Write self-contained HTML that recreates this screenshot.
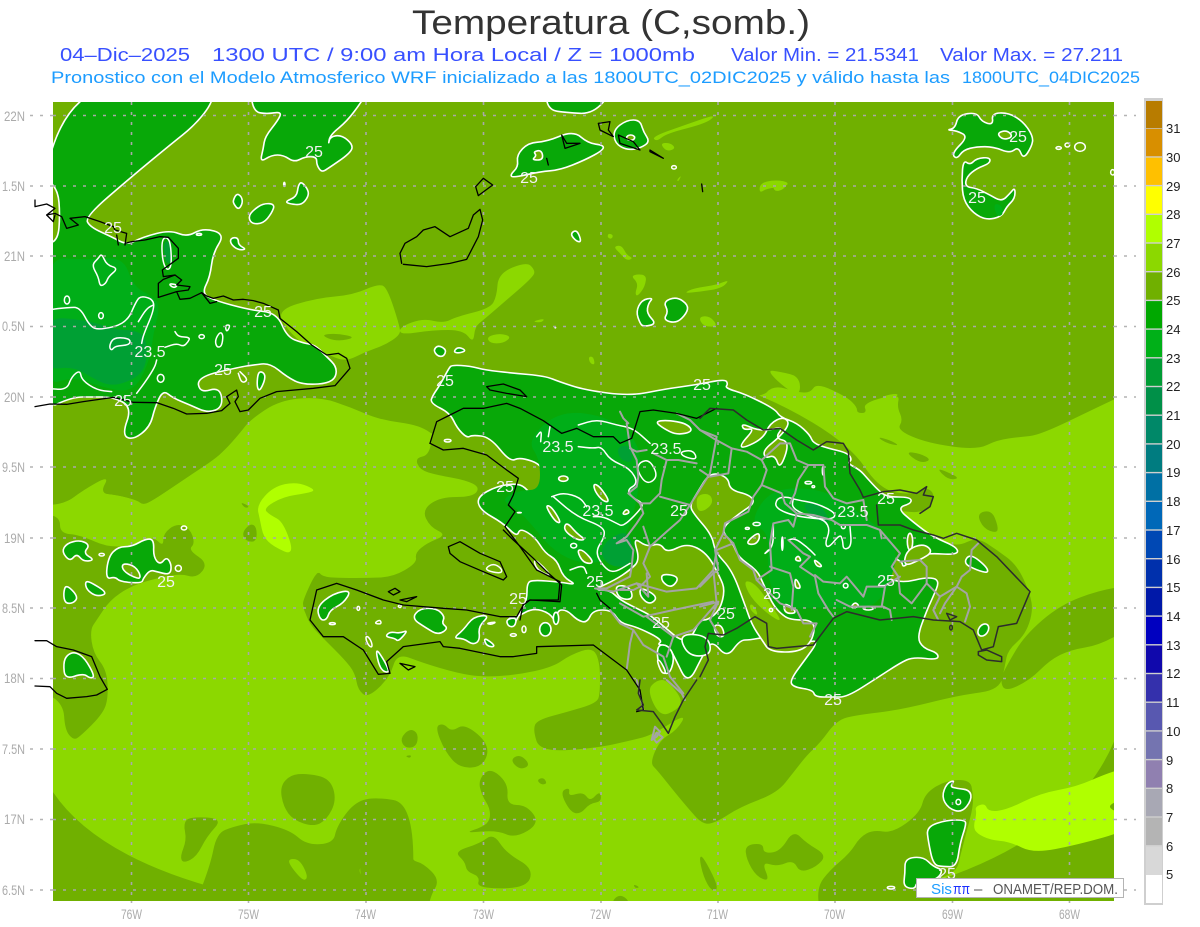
<!DOCTYPE html>
<html><head><meta charset="utf-8"><title>Temperatura</title>
<style>
html,body{margin:0;padding:0;background:#fff}
svg{display:block}
polygon,polyline,path,ellipse{vector-effect:non-scaling-stroke;stroke-linejoin:round;stroke-linecap:round}
.m{fill:#8cd800;stroke:none}
.d{fill:#70b000;stroke:none}
.y{fill:#b0ff00;stroke:none}
.e{fill:#00ae18;stroke:none}
.f{fill:#00a034;stroke:none}
.g{fill:#08a808;stroke:#fff;stroke-width:1.6}
.h{fill:#70b000;stroke:#fff;stroke-width:1.6}
.l{fill:none;stroke:#fff;stroke-width:1.5}
.c{fill:none;stroke:#000;stroke-width:1.3}
.k{fill:none;stroke:#2c2c2c;stroke-width:1.5}
.b{fill:none;stroke:#a4a4a4;stroke-width:2}
.gr path{stroke-linecap:butt}
.t text{font-family:"Liberation Sans",sans-serif}
.lab text{font-family:"Liberation Sans",sans-serif;font-size:16px;fill:#f2f2f2;text-anchor:middle}
.ax text{font-family:"Liberation Sans",sans-serif;font-size:14px;fill:#ababab}
.cb text{font-family:"Liberation Sans",sans-serif;font-size:13px;fill:#222}
</style></head><body>
<svg xmlns="http://www.w3.org/2000/svg" width="1200" height="927" viewBox="0 0 1200 927">
<defs><clipPath id="mp"><rect x="53" y="102" width="1061" height="799"/></clipPath></defs>

<!-- titles -->
<g class="t">
<text x="412" y="34" font-size="34" fill="#333" textLength="398" lengthAdjust="spacingAndGlyphs">Temperatura (C,somb.)</text>
<g font-size="18" fill="#3850ff">
<text x="60" y="61" textLength="130" lengthAdjust="spacingAndGlyphs">04–Dic–2025</text>
<text x="212" y="61" textLength="483" lengthAdjust="spacingAndGlyphs">1300 UTC / 9:00 am Hora Local / Z = 1000mb</text>
<text x="731" y="61" textLength="188" lengthAdjust="spacingAndGlyphs">Valor Min. = 21.5341</text>
<text x="940" y="61" textLength="183" lengthAdjust="spacingAndGlyphs">Valor Max. = 27.211</text>
</g>
<g font-size="17" fill="#1c9cff">
<text x="51" y="83" textLength="899" lengthAdjust="spacingAndGlyphs">Pronostico con el Modelo Atmosferico WRF inicializado a las 1800UTC_02DIC2025 y válido hasta las</text>
<text x="962" y="83" textLength="178" lengthAdjust="spacingAndGlyphs">1800UTC_04DIC2025</text>
</g>
</g>

<g clip-path="url(#mp)">
<rect x="53" y="102" width="1061" height="799" fill="#70b000"/>

<!-- main 27 region -->
<polygon class="m" points="30,505 63,505 83,490 110,475 100,493 117,495 137,500 143,505 153,500 173,487 193,473 213,460 225,450 240,433 250,420 280,400 320,397 350,407 380,420 420,425 440,440 760,400 773,385 797,392 810,393 817,383 847,397 857,407 857,413 867,413 863,403 900,393 897,407 903,420 897,430 927,443 977,450 997,440 1020,437 1040,435 1100,406 1130,392 1130,925 30,925"/>
<polygon class="m" points="277,310 317,298 353,295 380,283 388,290 400,327 400,335 385,345 365,352 345,362 325,353 307,347 287,330"/>
<g transform="translate(0,220) scale(.33333)">
<polygon class="d" points="960,345 1010,340 1070,352 1010,365"/>
</g>
<g transform="translate(400,100) scale(.33333)">
<polygon class="m" points="0,680 70,655 130,670 170,650 270,625 290,590 295,520 380,485 405,510 400,530 320,600 250,660 225,680 220,730 190,690 100,690 0,705"/>
<polygon class="m" points="755,110 870,70 950,42 920,70 800,100 770,125"/>
<polygon class="m" points="780,130 810,128 828,145 800,155"/>
<polygon class="m" points="640,440 665,435 680,465 700,475 680,482 660,460"/>
<polygon class="m" points="625,400 640,405 635,418 622,412"/>
<polygon class="m" points="690,525 740,522 735,560 712,590 705,580 715,550"/>
<polygon class="m" points="850,580 880,565 950,555 990,538 965,565 900,575"/>
<polygon class="m" points="895,650 930,648 955,680 910,680"/>
<polygon class="m" points="1080,250 1120,240 1165,245 1160,260 1100,265 1078,280"/>
<polygon class="m" points="1100,810 1140,815 1200,830 1200,890 1150,860"/>
<polygon class="m" points="260,710 300,700 335,710 310,730 270,730"/>
<polygon class="m" points="395,665 435,655 425,668"/>
<polygon class="m" points="565,770 580,770 585,795 570,790"/>
<polygon class="m" points="830,240 845,225 835,245"/>
</g>
<g transform="translate(780,100) scale(.33333)">
<polygon class="m" points="-20,240 25,245 10,270 -20,275"/>
<polygon class="m" points="300,890 360,878 340,900"/>
</g>

<!-- 26 over 27: Hispaniola envelope -->
<polygon class="d" points="303,600 317,570 323,577 343,578 367,578 393,577 417,563 415,553 427,543 447,535 430,527 422,510 440,497 473,497 480,487 465,480 437,475 420,470 415,458 430,455 433,425 433,380 700,375 775,400 850,445 880,490 913,495 927,487 935,495 930,508 917,513 895,510 933,537 957,547 977,537 997,550 1017,565 1030,593 1033,612 1025,635 1008,650 1005,665 1000,690 960,695 900,710 857,715 837,720 820,743 807,755 793,773 777,793 740,807 717,822 703,825 687,807 673,790 657,770 650,763 660,740 677,730 687,713 652,735 633,740 597,748 540,752 533,730 537,720 567,712 597,703 600,693 600,663 593,647 570,655 553,667 517,675 482,677 457,673 423,663 397,653 390,677 368,698 358,690 355,673 345,660 325,640 310,625 303,607"/>
<polygon class="m" points="647,690 657,680 667,680 683,700 677,710 660,717"/>
<polygon class="d" points="1000,680 1007,665 1025,635 1060,605 1100,590 1135,585 1135,625 1100,645 1070,650 1050,660 1030,680 1005,692"/>
<!-- Mona / SE 26 -->
<polygon class="d" points="817,887 830,870 850,853 860,837 873,830 893,833 920,813 925,793 947,780 970,780 973,793 973,807 967,830 960,857 957,870 943,877 915,893 915,915 820,915"/>
<g transform="translate(40,450) scale(.33333)">
<polygon class="d" points="0,190 60,200 60,250 120,255 210,295 300,280 340,260 370,290 370,250 410,220 450,235 465,280 445,300 505,340 470,385 420,370 330,390 270,410 210,450 170,510 150,540 160,610 200,660 205,740 190,790 120,860 100,870 75,840 70,760 0,720"/>
<polygon class="d" points="-60,-60 555,-60 555,0 520,30 460,70 400,110 340,150 310,165 290,150 230,135 180,130 210,75 130,120 70,165 -60,165"/>
<polygon class="d" points="720,1010 750,975 800,970 870,985 890,1050 860,1110 820,1130 760,1110 730,1070"/>
<polygon class="d" points="450,1400 510,1250 530,1150 580,1130 650,1115 750,1140 800,1185 880,1180 890,1130 940,1060 1000,1040 1120,1060 1120,1400"/>
<polygon class="m" points="750,1225 780,1230 805,1280 790,1295 745,1240"/>
<polygon class="m" points="950,1250 1010,1235 975,1280 975,1300"/>
<polygon class="d" points="430,1240 420,1220 440,1170 430,1120 450,1100 550,1105 500,1160 470,1220"/>
<polygon class="d" points="130,1250 240,1210 275,1260 200,1290 150,1280"/>
<polygon class="d" points="50,1400 110,1305 170,1310 130,1400"/>
<polygon class="d" points="310,1265 350,1260 345,1290 390,1400 300,1400 330,1310"/>
<polygon class="d" points="130,1190 155,1185 150,1200 135,1200"/>
<polygon class="d" points="605,250 630,220 650,230 650,275 620,275"/>
<polygon class="d" points="600,155 630,170 615,175"/>
<polygon class="d" points="790,470 815,445 815,495 795,490"/>
<polygon class="d" points="830,360 845,390 850,405 825,410"/>
<polygon class="y" points="650,165 700,110 770,95 830,120 800,130 730,140 670,175 690,195 730,215 765,318 700,290 670,260 660,210"/>
</g>
<g transform="translate(380,680) scale(.33333)">
<polygon class="d" points="-60,360 70,400 100,460 90,540 130,550 180,600 150,650 140,720 -60,720"/>
<polygon class="d" points="60,175 90,145 115,160 110,200 75,205"/>
<polygon class="d" points="75,228 95,225 90,235"/>
<polygon class="d" points="165,140 190,130 215,155 255,130 330,195 310,260 240,265 195,215"/>
<polygon class="d" points="390,240 420,222 452,255 420,270"/>
<polygon class="d" points="295,300 330,262 385,310 380,375 440,375 480,430 405,475 350,450 250,460 310,440 330,420 330,385 305,345"/>
<polygon class="d" points="222,515 300,490 340,460 380,520 460,565 440,625 290,625 300,590 260,575 255,545"/>
<polygon class="d" points="470,300 490,292 502,310 485,315"/>
<polygon class="d" points="540,335 570,322 565,350 610,335 630,365 660,332 665,365 630,370 600,403 570,395"/>
<polygon class="d" points="690,670 720,640 755,670"/>
<polygon class="d" points="1095,495 1150,490 1150,520 1200,515 1240,450 1280,490 1340,525 1310,560 1260,578 1240,540 1190,560 1145,545 1170,605 1130,590 1100,540"/>
<polygon class="d" points="957,530 970,530 1018,625 995,635 970,590"/>
<polygon class="d" points="760,612 780,622 765,625"/>
<polygon class="d" points="1360,520 1370,510 1370,522"/>
</g>
<g transform="translate(700,380) scale(.33333)">
<polygon class="d" points="530,170 570,180 600,198 560,190"/>
<polygon class="d" points="615,215 660,220 695,240 660,250"/>
<polygon class="d" points="710,265 740,275 780,295 745,300"/>
<polygon class="d" points="830,400 875,390 895,440 890,460 850,445"/>
</g>
<!-- 28 -->
<g transform="translate(860,770) scale(.33333)">
<polygon class="y" points="345,110 375,100 385,125 440,120 540,70 650,50 740,10 810,-10 810,80 730,110 810,140 810,180 650,225 520,250 450,215 390,210 350,190 340,170 350,130"/>
</g>

<!-- 25 fills: Cuba -->
<polygon class="g" points="40,85 213,85 213,102 195,125 170,145 130,178 85,217 90,227 112,237 127,245 143,237 170,230 187,237 203,228 225,234 213,253 210,277 202,293 213,300 250,310 277,313 287,337 303,343 315,345 325,355 338,368 333,383 303,385 287,377 270,363 253,365 240,367 197,377 200,393 220,387 223,407 208,413 190,405 173,398 163,390 155,407 150,427 133,440 122,435 132,407 113,397 93,397 72,397 40,412"/>
<polygon class="h" points="45,177 58,190 60,215 58,240 45,245"/>
<g transform="translate(0,220) scale(.33333)">
<polygon class="e" points="130,110 260,120 370,110 400,200 460,230 480,260 460,340 450,420 400,520 300,500 220,470 130,500"/>
<polygon class="f" points="130,290 260,300 350,330 400,330 440,350 440,440 400,480 330,500 270,470 220,440 130,450"/>
<polygon class="f" points="490,60 515,70 515,130 495,130"/>
<polygon class="l" points="305,100 320,135 355,145 325,170 318,190 300,200 295,170 275,135 295,115"/>
<polygon class="l" points="500,50 512,70 515,140 500,152 487,120 485,60"/>
<polyline class="l" points="140,270 205,262 240,262 270,320 300,330 380,310 410,240 425,228 460,238 462,270 430,345 425,370"/>
<polyline class="l" points="415,305 440,265 460,255"/>
<polyline class="l" points="470,420 465,440 440,480 410,520"/>
<polyline class="l" points="140,505 200,510 215,470 240,450 245,480 290,510 335,515"/>
<polygon class="l" points="340,352 390,355 390,375 345,378 335,392 327,380"/>
<polyline class="l" points="495,382 530,370 550,380 565,365 570,352 535,350 525,335"/>
<polygon class="l" points="660,335 670,345 665,380 650,382 645,360"/>
<polygon class="l" points="675,315 692,315 680,338"/>
<ellipse class="l" cx="201" cy="240" rx="8" ry="12"/>
<ellipse class="l" cx="482" cy="475" rx="10" ry="12"/>
<ellipse class="l" cx="605" cy="350" rx="8" ry="6"/>
<ellipse class="l" cx="303" cy="287" rx="7" ry="9"/>
<polygon class="g" points="775,450 800,465 780,515 770,500"/>
<polyline class="l" points="720,455 745,480 725,490 715,460"/>
<polygon class="g" points="505,190 535,195 520,205"/>
<polygon class="d" points="480,590 500,550 520,560 485,615"/>
</g>
<g transform="translate(0,0) scale(.33333)">
<polygon class="g" points="750,260 760,335 800,342 845,335 835,360 795,410 790,445 780,487 815,465 850,465 883,487 915,470 950,470 950,495 965,517 985,505 1050,460 1060,435 1025,405 990,410 985,435 990,405 1040,365 1085,305 1110,260"/>
<polygon class="g" points="700,600 710,580 725,590 728,610 715,630 700,610"/>
<polygon class="g" points="745,650 760,630 790,610 825,612 815,640 790,670 755,672"/>
<polygon class="g" points="855,605 890,590 895,555 905,545 925,570 925,590 905,615 870,612"/>
<polygon class="g" points="690,720 700,712 715,715 715,735 740,748 715,750 695,735"/>
<ellipse class="l" cx="853" cy="553" rx="2" ry="6"/>
<ellipse class="l" cx="597" cy="703" rx="8" ry="3"/>
</g>

<!-- SW Cuba patches -->
<g transform="translate(40,450) scale(.33333)">
<polygon class="g" points="65,305 80,280 120,270 150,285 130,310 165,330 130,335 110,310 90,335"/>
<polygon class="g" points="205,320 235,290 275,290 320,265 342,270 340,320 360,345 380,320 395,345 390,375 350,365 330,360 310,385 305,400 240,395 225,380 197,388"/>
<polygon class="h" points="245,340 280,345 300,370 300,390 250,365"/>
<polygon class="g" points="135,395 150,395 205,430 170,440 140,420"/>
<polygon class="g" points="78,402 115,440 100,460 75,460 70,430"/>
<polygon class="g" points="70,640 80,615 105,605 135,625 165,680 150,685 130,670 75,688"/>
<ellipse class="l" cx="185" cy="314" rx="8" ry="4"/>
<ellipse class="l" cx="415" cy="355" rx="9" ry="9"/>
<ellipse class="l" cx="432" cy="234" rx="8" ry="6"/>
</g>

<!-- top middle -->
<g transform="translate(400,100) scale(.33333)">
<polygon class="g" points="435,-30 445,30 500,38 580,42 640,-30"/>
<polygon class="g" points="350,165 385,128 440,125 520,92 565,130 610,135 610,150 555,180 480,210 420,215 340,233 330,225 355,200"/>
<polygon class="h" points="400,155 425,150 430,180 395,180 410,167"/>
<polygon class="g" points="640,90 680,60 720,60 730,95 750,125 720,145 680,150 645,130"/>
<ellipse class="h" cx="692" cy="113" rx="12" ry="8"/>
<polygon class="g" points="510,402 530,388 545,425 530,425"/>
<ellipse class="l" cx="822" cy="202" rx="7" ry="5"/>
<polygon class="g" points="708,635 725,600 760,593 745,610 740,640 770,672 730,680 720,670"/>
<polygon class="g" points="790,605 830,590 865,615 860,640 830,670 790,660 805,635"/>
<polygon class="g" points="100,750 115,735 140,750 130,770 112,768"/>
<polygon class="g" points="160,755 175,740 200,752 175,760"/>
<ellipse cx="466" cy="683" rx="3" ry="3" fill="#fff"/>
</g>

<!-- NE patches -->
<g transform="translate(780,100) scale(.33333)">
<polygon class="g" points="500,90 525,85 535,45 590,37 605,65 640,75 635,40 685,38 730,65 760,110 755,140 730,178 715,140 690,160 640,140 590,140 550,150 530,178 515,160 565,110 530,92"/>
<polygon class="h" points="650,100 680,90 700,110 670,120"/>
<polygon class="g" points="550,180 570,195 590,175 630,172 630,190 590,205 560,230 555,260 590,265 630,285 665,305 690,280 705,262 705,295 680,320 665,350 620,360 580,340 550,300 545,240"/>
<polygon class="e" points="640,310 665,315 670,345 650,350"/>
<ellipse class="l" cx="900" cy="141" rx="16" ry="13"/>
<ellipse class="l" cx="862" cy="135" rx="7" ry="6"/>
<ellipse class="l" cx="836" cy="144" rx="8" ry="4"/>
<ellipse class="l" cx="998" cy="217" rx="6" ry="8"/>
</g>

<!-- Mona / PR patches -->
<g transform="translate(860,770) scale(.33333)">
<polygon class="g" points="285,30 270,50 290,55 330,60 335,90 305,128 265,115 245,80 260,40"/>
<ellipse class="l" cx="295" cy="96" rx="7" ry="8"/>
<polygon class="g" points="200,170 260,150 315,150 318,165 300,220 290,290 250,290 220,285 205,215"/>
<polygon class="g" points="135,265 190,260 220,290 250,300 230,330 170,335 165,358 130,350 135,310"/>
<ellipse class="l" cx="93" cy="353" rx="11" ry="4"/>
</g>

<!-- Hispaniola 25 -->
<polygon class="g" points="430,403 433,395 440,385 449,368 452,365 470,366 485,370 512,373 545,376 560,382 585,390 630,396 665,389 695,385 725,379 728,384 725,388 745,394 775,409 780,417 797,423 810,435 813,443 827,448 848,453 852,460 847,463 860,470 867,478 878,490 887,497 910,497 912,503 897,508 913,522 933,537 957,547 958,555 927,553 913,558 903,568 902,561 880,552 863,552 877,568 883,577 903,583 927,577 940,580 933,597 927,610 917,637 923,648 938,653 938,660 913,657 900,663 877,678 847,697 833,697 815,697 813,690 793,687 790,680 807,657 817,643 813,640 790,650 770,650 765,637 750,640 740,640 727,658 712,640 703,655 688,685 675,658 668,645 657,645 663,640 637,627 620,623 612,610 593,610 587,623 577,620 567,610 557,610 557,625 550,613 533,608 517,617 507,618 513,627 520,613 527,600 527,583 533,580 560,582 577,585 563,577 557,560 545,553 535,537 520,528 517,537 503,523 480,510 477,497 497,486 520,483 530,493 538,500 547,487 543,465 520,457 510,462 490,437 472,435 467,438 457,428 450,413"/>
<!-- colour patches -->
<polygon class="e" points="527,440 560,410 610,417 640,443 640,480 633,520 610,565 560,560 520,510 500,500 520,490 540,490 540,460"/>
<g transform="translate(420,380) scale(.33333)">
<polygon class="f" points="560,480 620,450 640,500 630,560 570,560 540,520"/>
<polygon class="f" points="590,200 630,195 640,250 600,240"/>
</g>
<g transform="translate(700,380) scale(.33333)">
<polygon class="e" points="200,340 290,320 400,340 520,430 600,500 560,640 500,690 380,680 250,690 200,600 210,460 150,430"/>
<polygon class="f" points="300,370 360,370 395,430 350,425"/>
</g>
<!-- holes -->
<polygon class="h" points="710,472 728,477 730,490 750,495 755,503 740,513 725,525 723,533 733,543 738,557 757,570 763,583 772,603 780,613 790,620 815,620 813,640 800,652 770,652 762,640 752,625 745,605 732,570 715,552 712,535 693,513 690,505 697,493"/>
<g transform="translate(700,380) scale(.33333)">
<polygon class="m" points="-10,345 30,340 40,370 10,395 -10,390"/>
<polygon class="m" points="150,670 165,680 175,710 150,690"/>
<polygon class="m" points="130,600 165,610 210,670 250,730 200,700 150,650"/>
</g>
<polygon class="h" points="633,537 647,547 660,543 667,553 687,543 707,553 720,577 725,590 720,610 708,620 700,620 690,640 680,640 668,630 650,615 640,610 620,600 610,590 593,590 615,580 630,570 640,560"/>
<g transform="translate(300,530) scale(.33333)">
<polygon class="g" points="1085,130 1140,140 1115,175 1085,155"/>
<polygon class="g" points="1020,170 1075,200 1050,225 1020,200"/>
<polygon class="g" points="945,165 990,170 1000,210 955,205"/>
<polygon class="g" points="1070,345 1105,345 1125,385 1105,440 1075,410"/>
<polygon class="h" points="1070,390 1080,390 1100,430 1085,430"/>
<polygon class="g" points="1140,330 1160,310 1225,320 1235,375 1170,380"/>
</g>
<!-- Haiti islands/loops -->
<g transform="translate(420,380) scale(.33333)">
<polyline class="l" points="475,200 520,205 545,200 570,240 630,265 655,310 620,330 640,355 670,370 660,390 610,440 590,430 550,410 520,410"/>
<polyline class="l" points="395,350 430,338 480,352 500,380"/>
<polyline class="l" points="400,350 470,410 550,440 555,470 525,515 550,560 580,580 630,550"/>
<polygon class="h" points="520,310 540,320 570,365 550,365 525,335"/>
<ellipse class="h" cx="430" cy="296" rx="14" ry="8"/>
<polygon class="h" points="375,375 395,380 425,430 405,425"/>
<polygon class="h" points="440,425 470,460 498,480 470,480 430,450"/>
<polygon class="h" points="620,385 630,400 605,405"/>
<ellipse class="l" cx="461" cy="497" rx="9" ry="7"/>
<polygon class="h" points="470,510 490,510 525,550 490,550"/>
<polyline class="l" points="450,570 490,555 500,580"/>
<polygon class="l" points="660,245 690,240 715,290 680,315 650,270"/>
<polyline class="l" points="475,135 530,118 590,135 640,145 690,190"/>
<polygon class="h" points="705,125 740,120 800,130 820,155 770,165 730,145"/>
<polyline class="l" points="350,170 365,150 362,185"/>
<polyline class="l" points="390,140 385,170"/>
<ellipse class="l" cx="83" cy="182" rx="10" ry="4"/>
<ellipse cx="298" cy="398" rx="8" ry="3" fill="#fff"/>
<polygon class="l" points="780,215 820,210 832,240 790,230"/>
<polygon class="h" points="340,535 370,560 395,590 350,570"/>
</g>
<g transform="translate(700,380) scale(.33333)">
<polygon class="l" points="230,355 260,350 290,360 350,370 410,400 395,420 290,410 225,385"/>
<polyline class="l" points="280,355 275,385 330,410 375,420 390,450 375,490 385,505 420,462 428,480 430,510 455,500 450,440"/>
<polygon class="h" points="135,490 175,455 180,475 165,495"/>
<ellipse class="l" cx="170" cy="432" rx="11" ry="5"/>
<ellipse class="l" cx="142" cy="445" rx="6" ry="3"/>
<polyline class="l" points="220,430 220,500 190,525 205,510"/>
<ellipse class="l" cx="247" cy="491" rx="2" ry="20"/>
<polyline class="l" points="265,480 285,475 320,500 345,525"/>
<polygon class="h" points="295,525 305,545 283,540"/>
<polygon class="h" points="340,535 370,560 350,560"/>
<polygon class="h" points="285,590 305,625 285,625"/>
<ellipse class="l" cx="437" cy="617" rx="7" ry="7"/>
<polygon class="h" points="465,665 480,680 450,685"/>
<ellipse class="l" cx="505" cy="685" rx="15" ry="5"/>
<ellipse class="h" cx="630" cy="485" rx="8" ry="25"/>
<polygon class="h" points="125,130 130,150 165,145 120,195 130,205 190,175 210,130 250,110 270,130 240,170 190,210 195,235 225,225 240,270 270,185 225,175 250,140 210,150 170,150"/>
<ellipse class="l" cx="369" cy="272" rx="2" ry="13"/>
<ellipse class="l" cx="325" cy="308" rx="10" ry="4"/>
<ellipse class="l" cx="340" cy="320" rx="4" ry="3"/>
<ellipse class="l" cx="430" cy="440" rx="6" ry="6"/>
<polygon class="h" points="620,510 670,490 700,515 660,540 610,560"/>
<polygon class="g" points="790,550 810,520 860,560 865,580 830,570"/>
<ellipse class="g" cx="850" cy="750" rx="14" ry="20" transform="rotate(35 850 750)"/>
<polygon class="h" points="250,670 275,680 290,700 255,700"/>
<ellipse class="l" cx="213" cy="690" rx="5" ry="5"/>
<polygon class="h" points="40,735 65,735 75,770 50,770"/>
</g>
<!-- Tiburon loops -->
<g transform="translate(300,530) scale(.33333)">
<polygon class="g" points="50,230 100,190 155,180 130,220 90,240 80,270 60,270"/>
<polygon class="g" points="335,265 360,235 410,235 435,260 425,280 445,295 415,315 380,295"/>
<polygon class="g" points="460,325 490,300 520,260 570,255 535,290 540,330 520,345 490,325"/>
<polygon class="g" points="255,320 270,305 300,310 325,300 295,335 285,325"/>
<polygon class="g" points="225,350 255,395 270,430 240,420"/>
<ellipse class="l" cx="207" cy="335" rx="6" ry="17" transform="rotate(-25 207 335)"/>
<ellipse class="l" cx="175" cy="235" rx="4" ry="6"/>
<ellipse class="l" cx="97" cy="281" rx="9" ry="3"/>
<polygon class="l" points="222,280 240,268 245,283"/>
<polygon class="l" points="292,228 305,222 302,235"/>
<polygon class="l" points="558,280 590,275 575,284"/>
<polygon class="g" points="550,320 590,350 560,350"/>
<ellipse class="l" cx="672" cy="298" rx="6" ry="10"/>
<ellipse class="l" cx="640" cy="315" rx="9" ry="4"/>
<ellipse class="g" cx="736" cy="298" rx="17" ry="20"/>
<ellipse class="g" cx="768" cy="265" rx="8" ry="18"/>
<polygon class="g" points="618,268 650,262 645,290 625,290"/>
<polygon class="l" points="555,115 580,100 605,115 605,130 570,125"/>
</g>

<!-- political boundaries -->
<g transform="translate(420,380) scale(.33333)">
<polyline class="b" points="620,130 630,200 650,240 655,290 650,320 625,340 660,370 670,400 650,430 620,470 590,490 620,480 640,510 635,560 630,590 560,625 530,625"/>
<polyline class="b" points="630,205 650,215 680,210"/>
<polyline class="b" points="700,220 740,240 775,240 830,250"/>
<polyline class="b" points="740,240 725,300 720,340 690,370 660,370"/>
<polyline class="b" points="720,350 810,375 870,280 890,170 840,150 810,120 770,100"/>
<polyline class="b" points="600,95 610,115 625,130"/>
<polyline class="b" points="670,440 690,500 670,550 690,590 660,620 640,630 600,630"/>
<polyline class="b" points="690,500 740,455 780,420 810,375"/>
</g>
<g transform="translate(300,530) scale(.33333)">
<polyline class="b" points="885,175 940,185 1010,160 1100,185 1190,175 1240,120 1250,60"/>
<polyline class="b" points="930,240 960,280 1000,300 990,340 980,420"/>
<polyline class="b" points="1000,300 1030,345 1090,380 1110,440 1150,490"/>
<polyline class="b" points="1010,160 1045,200 1040,130"/>
<polyline class="b" points="1040,260 1120,320 1100,380"/>
<polyline class="b" points="1120,320 1180,300 1250,220 1240,120"/>
<polyline class="b" points="960,220 1030,260 1120,240 1240,215"/>
<polyline class="b" points="1070,620 1055,630 1065,590 1080,605 1070,620"/>
</g>
<g transform="translate(700,380) scale(.33333)">
<polyline class="b" points="0,150 40,175 95,205 140,215 185,240 240,190 270,190 290,240 325,255 370,255 375,320 400,355 440,370 490,360"/>
<polyline class="b" points="95,205 85,280 30,290 0,270"/>
<polyline class="b" points="185,240 200,270 185,315 245,340 255,370 290,400 340,405 395,420 420,435 500,435 540,450 600,520 575,560 595,590 600,640 635,670 680,610 680,560 660,540 600,545"/>
<polyline class="b" points="325,255 295,300 285,340 270,370"/>
<polyline class="b" points="185,315 160,350 145,395 75,430 70,460 100,490 120,540 160,570 170,600 210,640 240,670 290,690 310,730 350,730 330,770"/>
<polyline class="b" points="290,400 280,440 265,420 220,430 210,490 215,570 170,600"/>
<polyline class="b" points="265,480 310,520 330,530 300,560 345,590 355,640 385,690 400,710"/>
<polyline class="b" points="210,560 270,580 280,620 275,690"/>
<polyline class="b" points="345,585 370,605 420,610 440,590 490,650 500,620 550,620 600,590"/>
<polyline class="b" points="410,660 450,680 550,680 570,690 575,720"/>
<polyline class="b" points="545,680 555,620"/>
<polyline class="b" points="540,450 545,475"/>
<polyline class="b" points="680,610 720,650 700,690 715,720"/>
<polyline class="b" points="720,650 770,620 800,640 810,680 795,725"/>
<polyline class="b" points="770,620 735,670 720,700"/>
<polyline class="b" points="770,620 785,590 810,570 815,510 835,490"/>
<polyline class="b" points="70,460 45,510 55,570 40,580 0,620"/>
<polyline class="b" points="100,490 50,510"/>
<polyline class="b" points="0,680 55,665 30,720 60,770"/>
<polyline class="b" points="490,360 500,420"/>
</g>
<g transform="translate(380,680) scale(.33333)">
<polygon class="b" points="830,158 848,172 830,188 820,175"/>
<polyline class="b" points="860,0 905,40 915,60"/>
<polyline class="b" points="770,0 780,40 790,90"/>
</g>

<!-- grid -->
<g class="gr" fill="none" stroke="#a8a8a8" stroke-width="1.6" stroke-dasharray="3 7">
<path d="M131.5 102V901M248.5 102V901M366 102V901M483.5 102V901M601 102V901M718 102V901M835 102V901M952.5 102V901M1069.5 102V901"/>
<path d="M53 115.5H1114M53 186H1114M53 256H1114M53 326.5H1114M53 397H1114M53 467H1114M53 538H1114M53 608H1114M53 678.5H1114M53 749H1114M53 819.5H1114M53 890H1114"/>
</g>
</g>

<!-- grid outside map -->
<g class="gr" fill="none" stroke="#b4b4b4" stroke-width="1.6" stroke-dasharray="3 7">
<path d="M30 115.5H53M30 186H53M30 256H53M30 326.5H53M30 397H53M30 467H53M30 538H53M30 608H53M30 678.5H53M30 749H53M30 819.5H53M30 890H53"/>
<path d="M1114 115.5H1136M1114 186H1136M1114 256H1136M1114 326.5H1136M1114 397H1136M1114 467H1136M1114 538H1136M1114 608H1136M1114 678.5H1136M1114 749H1136M1114 819.5H1136M1114 890H1136"/>
<path d="M131.5 901V908M248.5 901V908M366 901V908M483.5 901V908M601 901V908M718 901V908M835 901V908M952.5 901V908M1069.5 901V908" stroke-dasharray="2 5"/>
</g>

<!-- coasts -->
<g transform="translate(0,220) scale(.33333)">
<polyline class="c" points="105,560 150,552 200,553 250,545 340,532 400,547 470,548 520,565 560,582 620,580 665,572 690,550 680,530 710,510 715,530 705,545 720,575 745,570 780,535 830,515 940,505 1005,497 1050,445 1040,415 1015,400 980,405 935,375 890,335 840,295 835,270 790,250 760,242 730,238 700,240 670,228 640,235 620,228 605,218 570,235 540,238 530,215 565,210 570,200 530,195 545,180 525,165 490,170 487,150 535,115 535,85 505,52 480,50 435,60 395,65 375,70"/>
<polyline class="c" points="475,232 475,190 490,178 525,165"/>
<polyline class="c" points="475,232 530,215"/>
<polyline class="c" points="605,218 630,250 650,245"/>
</g>
<g transform="scale(.33333)">
<polyline class="c" points="375,735 380,700 345,690 340,680 300,665 255,650 210,655 235,675 200,685 185,650 165,640 140,645 165,625 140,612 105,620 105,600"/>
<polyline class="c" points="355,735 350,705"/>
<polyline class="c" points="140,645 160,665 165,645"/>
</g>
<g transform="translate(400,100) scale(.33333)">
<polyline class="c" points="5,490 0,460 15,430 50,410 70,390 105,380 150,410 205,385 220,345 240,328 248,360 235,410 200,478 150,490 80,500 10,493"/>
<polygon class="c" points="250,235 278,255 235,287 227,260"/>
<polyline class="c" points="485,105 500,130 540,130 495,145 485,105"/>
<polyline class="c" points="440,175 445,195"/>
<polyline class="c" points="595,70 630,65 625,90 640,110 600,90 595,70"/>
<polyline class="c" points="655,105 700,125 720,150 660,130 655,105"/>
<polygon class="c" points="750,150 790,175 750,155"/>
<polyline class="c" points="905,252 908,275"/>
</g>
<g transform="translate(40,450) scale(.33333)">
<polyline class="c" points="-15,572 20,572 50,590 100,600 155,620 180,680 202,718 170,735 140,740 80,745 50,730 30,710 -15,708"/>
</g>
<g transform="translate(420,380) scale(.33333)">
<polyline class="c" points="30,190 50,125 90,105 130,85 190,85 260,70 300,85 370,122 425,160 470,145 520,170 580,170 600,190 635,175 660,95 700,90 770,100 830,115 890,85"/>
<polygon class="c" points="200,20 250,12 300,30 320,50 260,40 210,30"/>
<polyline class="c" points="30,190 70,210 130,205 200,225 260,270 295,295 280,345 265,375 285,395 255,440 300,500 350,570 420,605 415,660 330,660 310,670 300,720"/>
</g>
<g transform="translate(300,530) scale(.33333)">
<polyline class="c" points="980,420 1020,480 1030,540 1010,545"/>
<polyline class="c" points="980,420 880,345 710,350 710,370 640,380 600,380 480,355 430,350 420,335 310,350 260,395 270,430 235,433 190,360 130,320 100,320 70,320 30,270 50,180 110,160 170,180 250,210 310,225 430,235 500,240 600,260 650,260 670,225 690,210 780,215 785,165 740,125 700,85 640,30 610,0"/>
<polygon class="c" points="445,50 480,35 540,70 600,95 620,140 610,150 550,125 480,95 450,70"/>
<polygon class="c" points="265,185 285,175 300,185 280,195"/>
<polygon class="c" points="300,210 350,200 320,215"/>
<polygon class="c" points="300,400 345,410 325,420"/>
<polyline class="c" points="890,190 900,210 930,235"/>
</g>
<g transform="translate(380,680) scale(.33333)">
<polyline class="k" points="950,0 910,60 885,110 865,160 845,130 820,95 770,90 790,75 775,40 780,0"/>
</g>
<g transform="translate(700,380) scale(.33333)">
<polyline class="k" points="0,115 30,85 100,90 140,120 190,150 240,145 290,180 340,210 380,185 430,190 445,215 450,280 480,330 490,352 550,335 600,330 650,340 680,320 670,345 700,350 690,380 660,400"/>
<polyline class="k" points="530,375 535,435 600,435 640,450 700,465 730,475 770,460 830,480 890,530 990,635 950,730 895,740 880,800 845,810 820,750 780,725 700,720 640,710 540,720 440,695 400,715 340,795 230,805 205,800 200,730 165,710 110,745 70,765 25,760 15,800 25,840 0,890"/>
<polygon class="k" points="835,815 860,810 905,830 905,845 860,840 835,825"/>
<polygon class="k" points="740,700 770,710 750,720"/>
<ellipse class="k" cx="753" cy="743" rx="4" ry="7"/>
</g>

<!-- contour labels -->
<g class="lab">
<text x="314" y="157">25</text><text x="529" y="183">25</text><text x="1018" y="142">25</text><text x="977" y="203">25</text>
<text x="113" y="233">25</text><text x="263" y="317">25</text><text x="223" y="375">25</text><text x="150" y="357">23.5</text>
<text x="123" y="406">25</text><text x="445" y="386">25</text><text x="702" y="390">25</text><text x="558" y="452">23.5</text>
<text x="666" y="454">23.5</text><text x="598" y="516">23.5</text><text x="505" y="492">25</text><text x="679" y="516">25</text>
<text x="886" y="504">25</text><text x="853" y="517">23.5</text><text x="595" y="587">25</text><text x="518" y="604">25</text>
<text x="772" y="599">25</text><text x="886" y="586">25</text><text x="726" y="619">25</text><text x="661" y="628">25</text>
<text x="833" y="705">25</text><text x="166" y="587">25</text><text x="947" y="879">25</text>
</g>

<!-- axis labels -->
<g class="ax">
<text x="4" y="121" textLength="21" lengthAdjust="spacingAndGlyphs">22N</text><text x="2" y="191" textLength="23" lengthAdjust="spacingAndGlyphs">1.5N</text>
<text x="4" y="261" textLength="21" lengthAdjust="spacingAndGlyphs">21N</text><text x="2" y="331" textLength="23" lengthAdjust="spacingAndGlyphs">0.5N</text>
<text x="4" y="402" textLength="21" lengthAdjust="spacingAndGlyphs">20N</text><text x="2" y="472" textLength="23" lengthAdjust="spacingAndGlyphs">9.5N</text>
<text x="4" y="543" textLength="21" lengthAdjust="spacingAndGlyphs">19N</text><text x="2" y="613" textLength="23" lengthAdjust="spacingAndGlyphs">8.5N</text>
<text x="4" y="683" textLength="21" lengthAdjust="spacingAndGlyphs">18N</text><text x="2" y="754" textLength="23" lengthAdjust="spacingAndGlyphs">7.5N</text>
<text x="4" y="824" textLength="21" lengthAdjust="spacingAndGlyphs">17N</text><text x="2" y="895" textLength="23" lengthAdjust="spacingAndGlyphs">6.5N</text>
<text x="121" y="919" textLength="21" lengthAdjust="spacingAndGlyphs">76W</text><text x="238" y="919" textLength="21" lengthAdjust="spacingAndGlyphs">75W</text>
<text x="355" y="919" textLength="21" lengthAdjust="spacingAndGlyphs">74W</text><text x="473" y="919" textLength="21" lengthAdjust="spacingAndGlyphs">73W</text>
<text x="590" y="919" textLength="21" lengthAdjust="spacingAndGlyphs">72W</text><text x="707" y="919" textLength="21" lengthAdjust="spacingAndGlyphs">71W</text>
<text x="824" y="919" textLength="21" lengthAdjust="spacingAndGlyphs">70W</text><text x="942" y="919" textLength="21" lengthAdjust="spacingAndGlyphs">69W</text>
<text x="1059" y="919" textLength="21" lengthAdjust="spacingAndGlyphs">68W</text>
</g>

<!-- colour bar -->
<g class="cb">
<rect x="1144" y="98" width="19" height="807" fill="#cfcfcf"/>
<rect x="1146" y="101" width="16" height="27.3" fill="#b87c00"/>
<rect x="1146" y="129" width="16" height="27.3" fill="#d88f00"/>
<rect x="1146" y="157.6" width="16" height="27.3" fill="#ffc000"/>
<rect x="1146" y="186.3" width="16" height="27.3" fill="#ffff00"/>
<rect x="1146" y="215" width="16" height="27.3" fill="#b0ff00"/>
<rect x="1146" y="243.7" width="16" height="27.3" fill="#8cd800"/>
<rect x="1146" y="272.4" width="16" height="27.3" fill="#70b000"/>
<rect x="1146" y="301.1" width="16" height="27.3" fill="#00a800"/>
<rect x="1146" y="329.8" width="16" height="27.3" fill="#00b018"/>
<rect x="1146" y="358.5" width="16" height="27.3" fill="#009c34"/>
<rect x="1146" y="387.2" width="16" height="27.3" fill="#009048"/>
<rect x="1146" y="415.9" width="16" height="27.3" fill="#008868"/>
<rect x="1146" y="444.6" width="16" height="27.3" fill="#007c80"/>
<rect x="1146" y="473.3" width="16" height="27.3" fill="#0070a4"/>
<rect x="1146" y="502" width="16" height="27.3" fill="#0068b8"/>
<rect x="1146" y="530.7" width="16" height="27.3" fill="#0048b4"/>
<rect x="1146" y="559.4" width="16" height="27.3" fill="#0030ac"/>
<rect x="1146" y="588.1" width="16" height="27.3" fill="#0018a8"/>
<rect x="1146" y="616.8" width="16" height="27.3" fill="#0000c0"/>
<rect x="1146" y="645.5" width="16" height="27.3" fill="#1008ac"/>
<rect x="1146" y="674.2" width="16" height="27.3" fill="#3430ac"/>
<rect x="1146" y="702.9" width="16" height="27.3" fill="#5858b0"/>
<rect x="1146" y="731.6" width="16" height="27.3" fill="#7474b0"/>
<rect x="1146" y="760.3" width="16" height="27.3" fill="#9080b0"/>
<rect x="1146" y="789" width="16" height="27.3" fill="#a8a8b4"/>
<rect x="1146" y="817.7" width="16" height="27.3" fill="#b4b4b4"/>
<rect x="1146" y="846.4" width="16" height="28.7" fill="#d8d8d8"/>
<rect x="1146" y="875" width="16" height="28" fill="#fff"/>
<text x="1166" y="133">31</text><text x="1166" y="162">30</text><text x="1166" y="191">29</text><text x="1166" y="219">28</text>
<text x="1166" y="248">27</text><text x="1166" y="277">26</text><text x="1166" y="305">25</text><text x="1166" y="334">24</text>
<text x="1166" y="363">23</text><text x="1166" y="391">22</text><text x="1166" y="420">21</text><text x="1166" y="449">20</text>
<text x="1166" y="477">19</text><text x="1166" y="506">18</text><text x="1166" y="535">17</text><text x="1166" y="564">16</text>
<text x="1166" y="592">15</text><text x="1166" y="621">14</text><text x="1166" y="650">13</text><text x="1166" y="678">12</text>
<text x="1166" y="707">11</text><text x="1166" y="736">10</text><text x="1166" y="765">9</text><text x="1166" y="793">8</text>
<text x="1166" y="822">7</text><text x="1166" y="851">6</text><text x="1166" y="879">5</text>
</g>

<!-- cartouche -->
<rect x="916.5" y="878.5" width="207" height="19" fill="#fff" stroke="#b4b4b4" stroke-width="1"/>
<g font-family="Liberation Sans, sans-serif" font-size="15">
<text x="931" y="894" fill="#1c9cff" textLength="21" lengthAdjust="spacingAndGlyphs">Sis</text>
<text x="953" y="894" fill="#1c30ff" textLength="17" lengthAdjust="spacingAndGlyphs">ππ</text>
<text x="974" y="894" fill="#555">–</text>
<text x="993" y="894" fill="#555" textLength="125" lengthAdjust="spacingAndGlyphs">ONAMET/REP.DOM.</text>
</g>
</svg>
<script>
(function(){
var NS='http://www.w3.org/2000/svg';
var els=document.querySelectorAll('polygon,polyline');
for(var i=0;i<els.length;i++){
 var el=els[i],cl=el.getAttribute('class')||'';
 if(cl==='c'||cl==='k'||cl==='b')continue;
 var raw=el.getAttribute('points').trim().split(/\s+/),p=[];
 for(var j=0;j<raw.length;j++){var a=raw[j].split(',');p.push([+a[0],+a[1]]);}
 if(p.length<3)continue;
 var mid=function(a,b){return ((a[0]+b[0])/2).toFixed(1)+' '+((a[1]+b[1])/2).toFixed(1);};
 var d='',n=p.length;
 if(el.tagName.toLowerCase()==='polygon'){
  d='M'+mid(p[n-1],p[0]);
  for(j=0;j<n;j++){d+='Q'+p[j][0]+' '+p[j][1]+' '+mid(p[j],p[(j+1)%n]);}
  d+='Z';
 }else{
  d='M'+p[0][0]+' '+p[0][1]+'L'+mid(p[0],p[1]);
  for(j=1;j<n-1;j++){d+='Q'+p[j][0]+' '+p[j][1]+' '+mid(p[j],p[j+1]);}
  d+='L'+p[n-1][0]+' '+p[n-1][1];
 }
 var q=document.createElementNS(NS,'path');
 q.setAttribute('class',cl);q.setAttribute('d',d);
 el.parentNode.replaceChild(q,el);
}
})();
</script>
</body></html>
